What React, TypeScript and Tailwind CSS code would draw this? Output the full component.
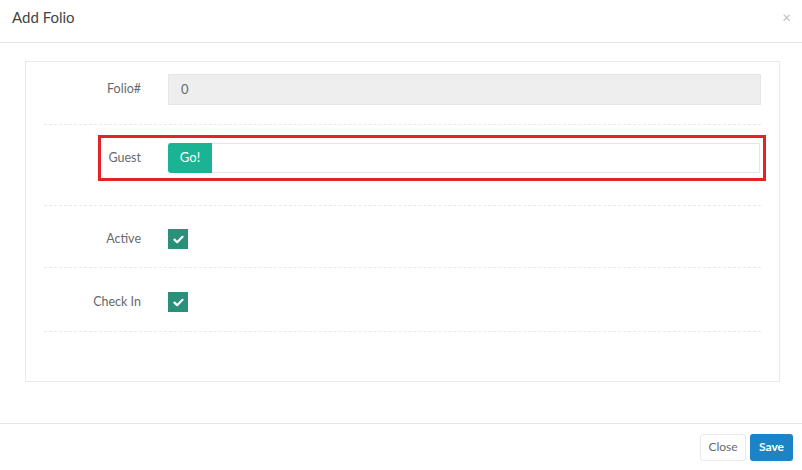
import React, { useState } from "react";

function Checkbox({ checked, onChange }: { checked: boolean; onChange: () => void }) {
  return (
    <button
      type="button"
      onClick={onChange}
      className={`w-5 h-5 flex items-center justify-center ${checked ? "bg-[#2a9079]" : "bg-white border border-[#d2d2d2]"}`}
    >
      {checked && (
        <svg width="11" height="9" viewBox="0 0 11 9" fill="none">
          <path d="M1.5 4.6 L4.2 7.2 L9.5 1.8" stroke="white" strokeWidth="2.2" strokeLinecap="round" strokeLinejoin="round" />
        </svg>
      )}
    </button>
  );
}

export default function App() {
  const [active, setActive] = useState(true);
  const [checkIn, setCheckIn] = useState(true);
  const [guest, setGuest] = useState("");

  return (
    <div className="w-[802px] h-[470px] bg-white flex flex-col text-[#676a6c]" style={{ fontFamily: "Lato, 'Open Sans', sans-serif" }}>
      {/* Header */}
      <div className="h-[43px] flex items-center justify-between pl-3 pr-[11px] border-b border-[#e5e5e5]">
        <span className="text-[15px] text-[#444] -mt-[7px]">Add Folio</span>
        <span className="text-[15px] text-[#c0c0c0] -mt-[7px]">×</span>
      </div>

      {/* Body */}
      <div className="flex-1 pt-[18px] pl-[25px] pr-[22px]">
        <div className="border border-[#e7eaec] pt-[12px] pb-[49px] pl-[18px] pr-[18px]">
          {/* Folio# */}
          <div className="flex items-center h-[31px]">
            <label className="w-[97px] text-right text-[12.5px]">Folio#</label>
            <div className="ml-[27px] flex-1 h-[31px] bg-[#eeeeee] border border-[#e5e6e7] flex items-center px-3 text-[13px]">0</div>
          </div>
          <div className="mt-[19px] border-t border-dashed border-[#e7eaec]" />

          {/* Guest */}
          <div className="relative mt-[10px] h-[46px] flex items-center">
            <div className="absolute left-[54px] -right-[5px] top-0 bottom-0 border-[3px] border-[#e5212b] pointer-events-none" />
            <label className="w-[97px] text-right text-[12.5px]">Guest</label>
            <div className="ml-[27px] flex-1 flex h-[30px] mr-[1px]">
              <button type="button" className="w-[44px] bg-[#1ab394] text-white text-[13px] rounded-l-[3px]">Go!</button>
              <input
                value={guest}
                onChange={(e) => setGuest(e.target.value)}
                className="flex-1 border border-[#e5e6e7] border-l-0 outline-none px-3 text-[13px]"
              />
            </div>
          </div>
          <div className="mt-[24px] border-t border-dashed border-[#e7eaec]" />

          {/* Active */}
          <div className="mt-[23px] h-5 flex items-center">
            <label className="w-[97px] text-right text-[12.5px]">Active</label>
            <div className="ml-[27px]">
              <Checkbox checked={active} onChange={() => setActive(!active)} />
            </div>
          </div>
          <div className="mt-[18px] border-t border-dashed border-[#e7eaec]" />

          {/* Check In */}
          <div className="mt-[24px] h-5 flex items-center">
            <label className="w-[97px] text-right text-[12.5px]">Check In</label>
            <div className="ml-[27px]">
              <Checkbox checked={checkIn} onChange={() => setCheckIn(!checkIn)} />
            </div>
          </div>
          <div className="mt-[19px] border-t border-dashed border-[#e7eaec]" />
        </div>
      </div>

      {/* Footer */}
      <div className="h-[47px] border-t border-[#e5e5e5] flex items-center justify-end gap-1 pr-[9px]">
        <button type="button" className="h-[27px] w-[46px] border border-[#e7eaec] rounded-[3px] bg-white text-[12px] text-[#676a6c]">Close</button>
        <button type="button" className="h-[27px] w-[43px] rounded-[3px] bg-[#1c84c6] text-white text-[12px] font-bold">Save</button>
      </div>
    </div>
  );
}
